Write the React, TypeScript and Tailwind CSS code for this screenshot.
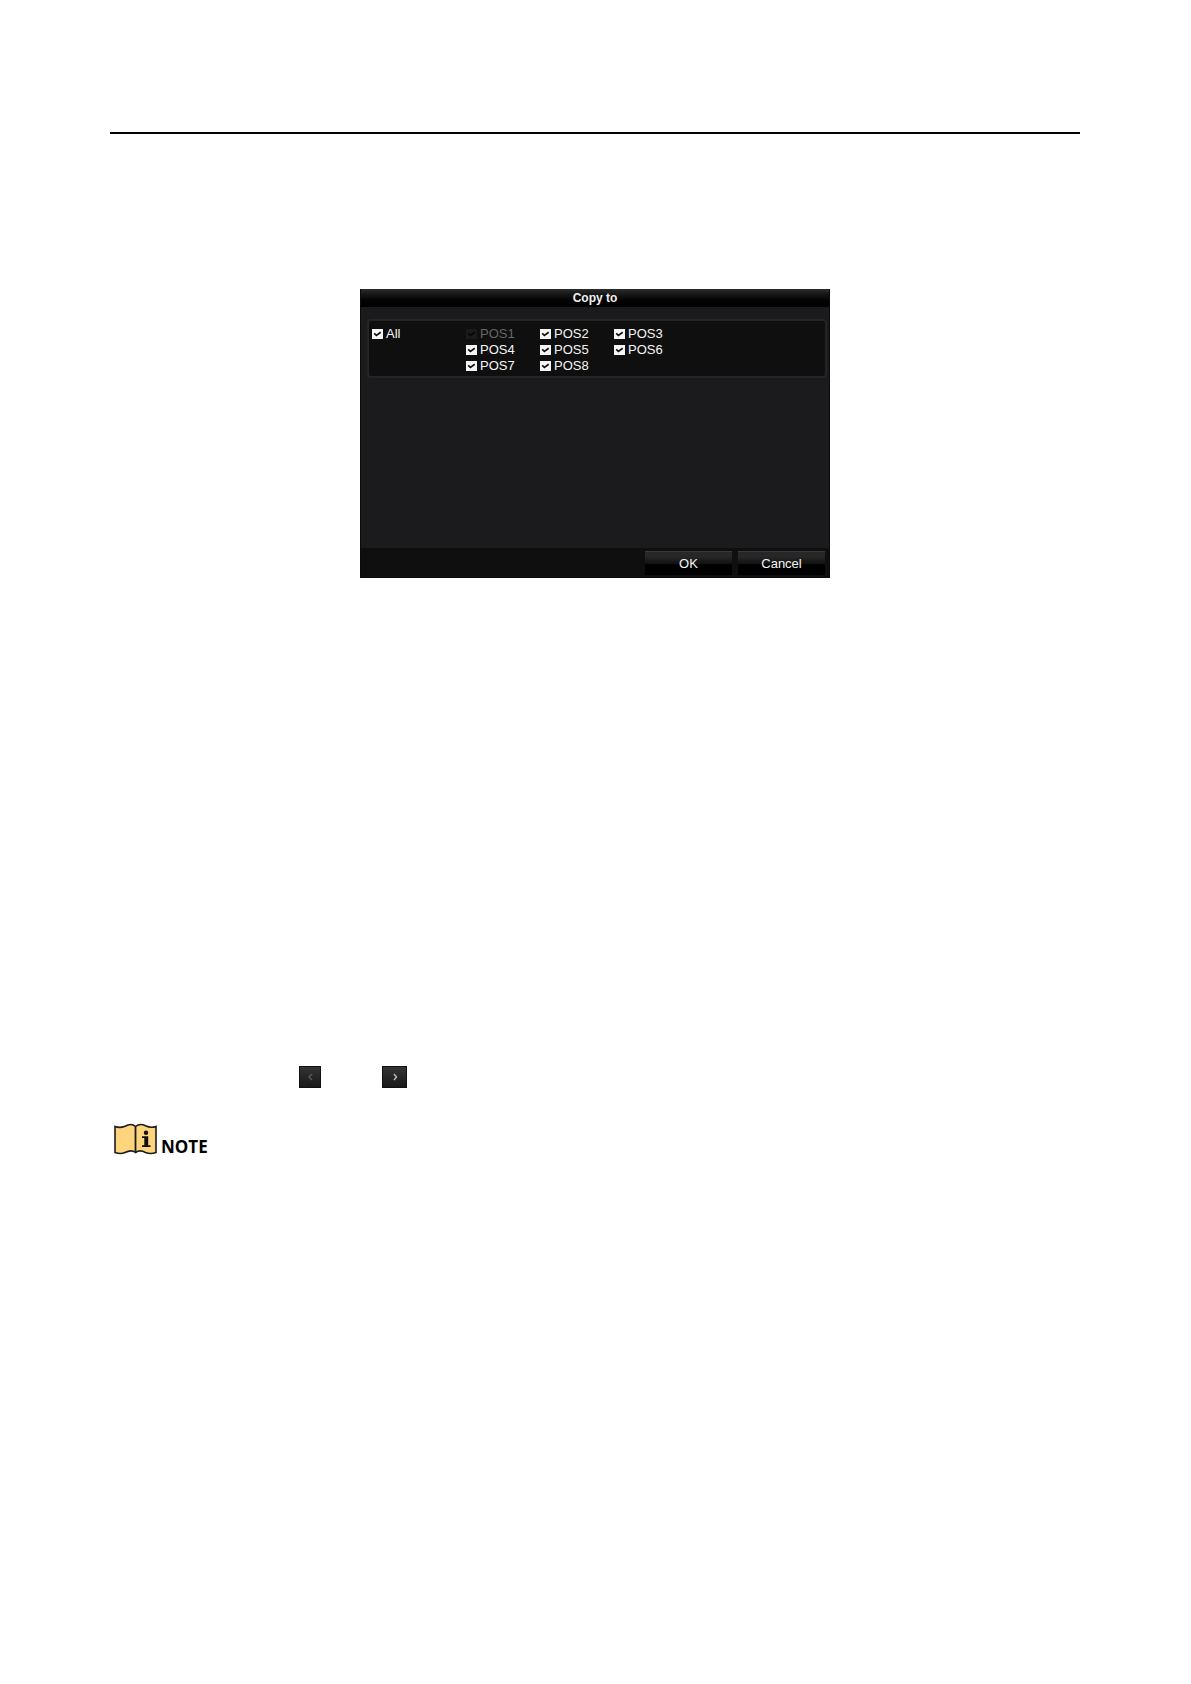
import { useState } from "react";

const channels = ["POS1", "POS2", "POS3", "POS4", "POS5", "POS6", "POS7", "POS8"];

// The source channel can't be copied onto itself
const source = "POS1";

type CheckItemProps = {
  label: string;
  checked: boolean;
  disabled?: boolean;
  onChange: () => void;
};

function CheckItem({ label, checked, disabled, onChange }: CheckItemProps) {
  return (
    <label
      className={`flex h-4 items-center gap-[3px] text-[13px] leading-4 ${
        disabled ? "text-[#666666]" : "text-[#f5f5f5]"
      }`}
    >
      <span className="relative block h-[10px] w-[11px]">
        <input
          type="checkbox"
          checked={checked}
          disabled={disabled}
          onChange={onChange}
          className="block h-[10px] w-[11px] appearance-none bg-[#f5f5f5] disabled:bg-[#1a1a1b]"
        />
        {checked && (
          <svg
            viewBox="0 0 11 10"
            fill="none"
            stroke={disabled ? "#060606" : "#111111"}
            strokeWidth="1.7"
            className="pointer-events-none absolute inset-0 h-[10px] w-[11px]"
          >
            <path d="M2.2 4.4L4.4 6.4L8.700 3.200" />
          </svg>
        )}
      </span>
      {label}
    </label>
  );
}

function DialogButton({ children }: { children: string }) {
  return (
    <button
      type="button"
      className="h-6 w-[87px] border-t border-[#39393b] bg-linear-to-b from-[#272728] from-20% via-[#121213] via-50% to-black to-60% text-[13px] leading-4 text-[#f5f5f5]"
    >
      {children}
    </button>
  );
}

function CopyToDialog() {
  const [selected, setSelected] = useState<string[]>(channels);
  const allSelected = selected.length === channels.length;

  const toggle = (name: string) =>
    setSelected((prev) =>
      prev.includes(name) ? prev.filter((n) => n !== name) : [...prev, name]
    );

  return (
    <section
      aria-label="Copy to"
      className="flex min-h-[289px] w-full max-w-[470px] flex-col border-x border-b border-[#0b0b0c] bg-[#1b1b1d]"
    >
      <h2 className="h-[18px] bg-linear-to-b from-[#2c2c2c] via-[#0a0a0a] via-50% to-black text-center text-[12px] leading-[18px] font-bold text-[#f0f0f0]">
        Copy to
      </h2>

      {/* Channel list */}
      <div className="mt-3 mr-[2px] ml-[6px] flex rounded-[4px] border-2 border-[#252527] bg-[#0f0f0f] px-[3px] pt-[5px] pb-[2px]">
        <div className="w-[94px]">
          <CheckItem
            label="All"
            checked={allSelected}
            onChange={() => setSelected(allSelected ? [source] : channels)}
          />
        </div>
        <div className="grid grid-cols-[74px_74px_74px]">
          {channels.map((name) => (
            <CheckItem
              key={name}
              label={name}
              checked={selected.includes(name)}
              disabled={name === source}
              onChange={() => toggle(name)}
            />
          ))}
        </div>
      </div>

      {/* Actions */}
      <div className="mt-auto flex justify-end gap-[6px] bg-[#0f0f0f] px-1 pt-[3px] pb-[2px]">
        <DialogButton>OK</DialogButton>
        <DialogButton>Cancel</DialogButton>
      </div>
    </section>
  );
}

function NoteIcon() {
  return (
    <svg viewBox="0 0 43 32" fill="none" className="h-8 w-[43px]">
      <path
        d="M1 3.5C5 5 8 4.5 11 3.2C15 1 18.500 0.500 21.500 3.500C25 0.500 28 1 31.500 2.800C35 4.500 38 5 42 3.500V29.500C38 31 35 31 31.500 29.500C28 27.500 25 27 21.500 29.500C18.500 27 15 27.500 11 29.500C8 31 5 31 1 29.500Z"
        fill="#fed47c"
        stroke="#1b1b1b"
        strokeWidth="1.6"
      />
      <path d="M21.500 3.500V29.500" stroke="#1b1b1b" strokeWidth="1.8" />
      <circle cx="32" cy="9.800" r="2.200" fill="#111111" />
      <path
        d="M28 13.200H34.200V22.300H36.500V24H28V22.300H30.300V15H28Z"
        fill="#111111"
      />
    </svg>
  );
}

export default function App() {
  return (
    <main className="flex min-h-screen flex-col bg-white pr-[111px] pl-[110px] font-['Liberation_Sans',Arial,sans-serif]">
      <hr className="mt-[132px] h-[2px] border-0 bg-black" />

      <div className="mt-[155px] flex justify-center">
        <CopyToDialog />
      </div>

      {/* Page navigation */}
      <nav className="mt-[488px] flex gap-[61px] pl-[189px]">
        <button
          type="button"
          aria-label="Previous page"
          disabled
          className="flex h-[22px] w-[22px] items-center justify-center border border-[#111111] bg-linear-to-b from-[#353535] to-[#191919]"
        >
          <svg viewBox="0 0 6 8" fill="none" className="h-2 w-[6px]">
            <path d="M5 1L2 4L5 7" stroke="#555555" strokeWidth="1.6" />
          </svg>
        </button>
        <button
          type="button"
          aria-label="Next page"
          className="flex h-[22px] w-[25px] items-center justify-center border border-[#111111] bg-linear-to-b from-[#353535] to-[#191919]"
        >
          <svg viewBox="0 0 6 8" fill="none" className="h-2 w-[6px]">
            <path d="M2 1L4.500 4L2 7" stroke="#b8b8b8" strokeWidth="1.5" />
          </svg>
        </button>
      </nav>

      {/* Note */}
      <div className="mt-[35px] flex items-end gap-1 pl-1">
        <NoteIcon />
        <span className="font-['Open_Sans',sans-serif] text-[17px] leading-4 font-bold text-black">
          NOTE
        </span>
      </div>
    </main>
  );
}
